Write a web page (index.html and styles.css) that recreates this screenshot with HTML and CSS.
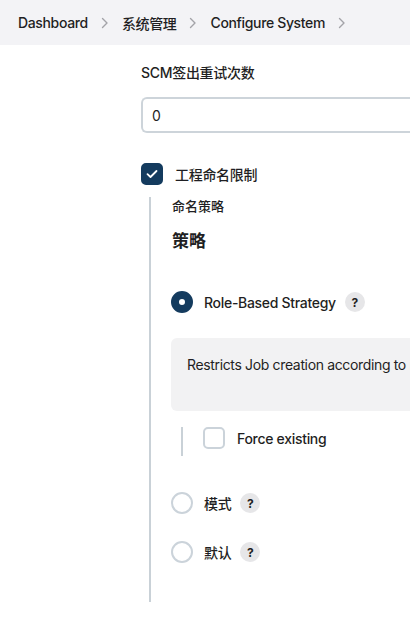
FILE: index.html
```html
<!DOCTYPE html>
<html lang="zh">
<head>
<meta charset="utf-8">
<title>Configure System</title>
<link rel="stylesheet" href="styles.css">
</head>
<body>
<nav class="breadcrumb">
  <span class="crumb">Dashboard</span>
  <svg class="chev" width="8" height="12" viewBox="0 0 8 12"><polyline points="1.5,1.5 6,6 1.5,10.5" fill="none" stroke="#a3a3a8" stroke-width="1.4" stroke-linecap="round" stroke-linejoin="round"/></svg>
  <span class="crumb">系统管理</span>
  <svg class="chev" width="8" height="12" viewBox="0 0 8 12"><polyline points="1.5,1.5 6,6 1.5,10.5" fill="none" stroke="#a3a3a8" stroke-width="1.4" stroke-linecap="round" stroke-linejoin="round"/></svg>
  <span class="crumb">Configure System</span>
  <svg class="chev" width="8" height="12" viewBox="0 0 8 12"><polyline points="1.5,1.5 6,6 1.5,10.5" fill="none" stroke="#a3a3a8" stroke-width="1.4" stroke-linecap="round" stroke-linejoin="round"/></svg>
</nav>

<main class="main">
  <div class="field-label">SCM签出重试次数</div>
  <div class="input">0</div>

  <div class="check-row">
    <span class="checkbox checked">
      <svg width="12" height="10" viewBox="0 0 12 10"><polyline points="1.5,5.2 4.5,8 10.5,2" fill="none" stroke="#fff" stroke-width="1.8" stroke-linecap="round" stroke-linejoin="round"/></svg>
    </span>
    <span class="check-label">工程命名限制</span>
  </div>

  <div class="nested">
    <div class="sub-label">命名策略</div>
    <div class="sub-heading">策略</div>

    <div class="radio-row first">
      <span class="radio selected"></span>
      <span class="radio-label">Role-Based Strategy</span>
      <span class="help">?</span>
    </div>

    <div class="desc"><span class="desc-text">Restricts Job creation according to roles</span></div>

    <div class="inner-nested">
      <div class="check-row inner">
        <span class="checkbox"></span>
        <span class="check-label">Force existing</span>
      </div>
    </div>

    <div class="radio-row second">
      <span class="radio"></span>
      <span class="radio-label">模式</span>
      <span class="help">?</span>
    </div>

    <div class="radio-row third">
      <span class="radio"></span>
      <span class="radio-label">默认</span>
      <span class="help">?</span>
    </div>
  </div>
</main>
</body>
</html>
```

FILE: styles.css
```css
html, body {
  margin: 0;
  padding: 0;
  background: #ffffff;
  overflow: hidden;
}
body {
  font-family: Inter, "Noto Sans CJK SC", sans-serif;
  color: #1f1f23;
  font-size: 14px;
  width: 410px;
  height: 624px;
}
.breadcrumb {
  height: 45px;
  background: #f3f3f6;
  display: flex;
  align-items: center;
  padding-left: 18px;
  gap: 13px;
  white-space: nowrap;
}
.crumb {
  font-size: 14px;
  font-weight: 500;
  letter-spacing: -0.35px;
  color: #1f1f23;
}
.chev {
  display: block;
}
.main {
  padding-left: 141px;
  padding-top: 18px;
}
.field-label {
  font-size: 14px;
  font-weight: 500;
  line-height: 20px;
  letter-spacing: -0.3px;
}
.input {
  margin-top: 14px;
  height: 36px;
  box-sizing: border-box;
  border: 2px solid #cdd4da;
  border-right: none;
  border-radius: 6px 0 0 6px;
  padding-left: 9px;
  display: flex;
  align-items: center;
  font-size: 14px;
}
.check-row {
  margin-top: 30px;
  display: flex;
  align-items: center;
  gap: 12px;
  height: 22px;
}
.checkbox {
  width: 22px;
  height: 22px;
  box-sizing: border-box;
  border-radius: 5px;
  border: 2px solid #cbd3da;
  background: #fff;
  display: flex;
  align-items: center;
  justify-content: center;
  flex: none;
}
.checkbox.checked {
  background: #143b5e;
  border-color: #143b5e;
}
.check-label {
  font-size: 14px;
  font-weight: 500;
  letter-spacing: -0.3px;
}
.nested {
  margin-top: 12px;
  margin-left: 8px;
  border-left: 2px solid #c9d1d7;
  padding-left: 21px;
  height: 405px;
  box-sizing: border-box;
}
.sub-label {
  font-size: 13px;
  font-weight: 500;
  line-height: 18px;
}
.sub-heading {
  margin-top: 14px;
  font-size: 17px;
  font-weight: 600;
  line-height: 24px;
}
.radio-row {
  display: flex;
  align-items: center;
  height: 22px;
  margin-left: -1px;
}
.radio-row.first { margin-top: 38px; }
.radio-row.second { margin-top: 36px; }
.radio-row.third { margin-top: 27px; }
.radio {
  width: 22px;
  height: 22px;
  box-sizing: border-box;
  border-radius: 50%;
  border: 2px solid #cbd3da;
  background: #fff;
  flex: none;
  margin-right: 11px;
}
.radio.selected {
  border: 8px solid #143b5e;
}
.radio-label {
  font-size: 14px;
  font-weight: 500;
  letter-spacing: -0.3px;
  margin-right: 9px;
}
.help {
  width: 20px;
  height: 20px;
  border-radius: 50%;
  background: #e6e6e8;
  font-size: 12px;
  font-weight: 700;
  display: flex;
  align-items: center;
  justify-content: center;
  color: #1f1f23;
}
.desc {
  margin-top: 25px;
  margin-left: -1px;
  background: #f2f2f3;
  border-radius: 6px 0 0 6px;
  padding: 17px 0 36px 16px;
  font-size: 14px;
  line-height: 20px;
  letter-spacing: -0.35px;
  white-space: nowrap;
  overflow: hidden;
}
.inner-nested {
  margin-top: 16px;
  margin-left: 9px;
  border-left: 2px solid #c9d1d7;
  padding-left: 20px;
  height: 29px;
}
.check-row.inner {
  margin-top: 4px;
}
```
